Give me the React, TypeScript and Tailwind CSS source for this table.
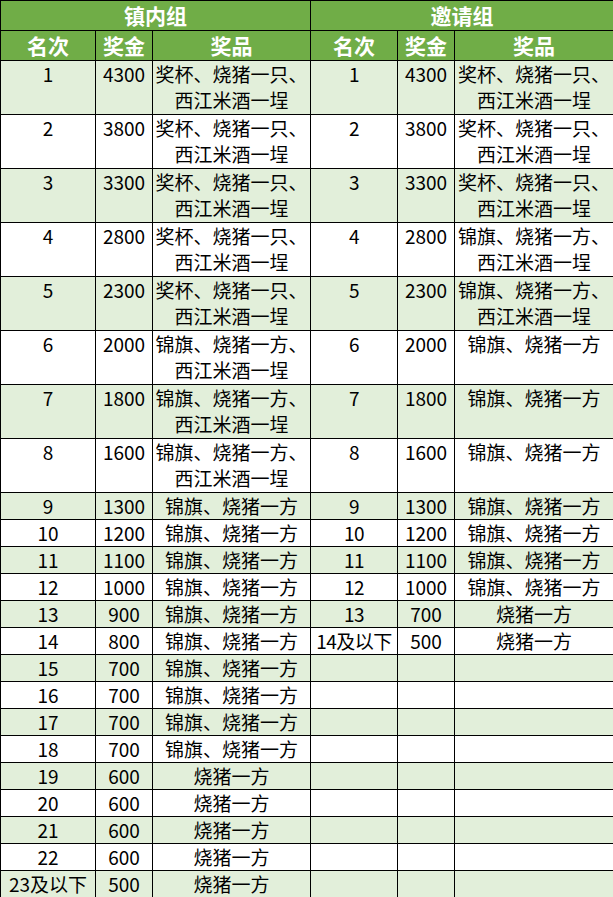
import React from "react";

type Row = { rank: string; money: string; prize: string[] };

const A = ["奖杯、烧猪一只、", "西江米酒一埕"];
const B = ["锦旗、烧猪一方、", "西江米酒一埕"];
const C = ["锦旗、烧猪一方"];
const D = ["烧猪一方"];

const townRows: Row[] = [
  { rank: "1", money: "4300", prize: A },
  { rank: "2", money: "3800", prize: A },
  { rank: "3", money: "3300", prize: A },
  { rank: "4", money: "2800", prize: A },
  { rank: "5", money: "2300", prize: A },
  { rank: "6", money: "2000", prize: B },
  { rank: "7", money: "1800", prize: B },
  { rank: "8", money: "1600", prize: B },
  { rank: "9", money: "1300", prize: C },
  { rank: "10", money: "1200", prize: C },
  { rank: "11", money: "1100", prize: C },
  { rank: "12", money: "1000", prize: C },
  { rank: "13", money: "900", prize: C },
  { rank: "14", money: "800", prize: C },
  { rank: "15", money: "700", prize: C },
  { rank: "16", money: "700", prize: C },
  { rank: "17", money: "700", prize: C },
  { rank: "18", money: "700", prize: C },
  { rank: "19", money: "600", prize: D },
  { rank: "20", money: "600", prize: D },
  { rank: "21", money: "600", prize: D },
  { rank: "22", money: "600", prize: D },
  { rank: "23及以下", money: "500", prize: D },
];

const inviteRows: Row[] = [
  { rank: "1", money: "4300", prize: A },
  { rank: "2", money: "3800", prize: A },
  { rank: "3", money: "3300", prize: A },
  { rank: "4", money: "2800", prize: B },
  { rank: "5", money: "2300", prize: B },
  { rank: "6", money: "2000", prize: C },
  { rank: "7", money: "1800", prize: C },
  { rank: "8", money: "1600", prize: C },
  { rank: "9", money: "1300", prize: C },
  { rank: "10", money: "1200", prize: C },
  { rank: "11", money: "1100", prize: C },
  { rank: "12", money: "1000", prize: C },
  { rank: "13", money: "700", prize: D },
  { rank: "14及以下", money: "500", prize: D },
];

const cell = "border border-black align-top text-center p-0 whitespace-nowrap";
const head = "border border-black text-center p-0 text-white font-bold text-[21px] leading-[29px]";

export default function App() {
  return (
    <div className="w-[613px] bg-white text-black font-['Noto_Sans_CJK_SC','Noto_Sans',sans-serif]">
      <table className="table-fixed border-collapse w-[613px] text-[19px] leading-[26px]">
        <colgroup>
          <col className="w-[95px]" />
          <col className="w-[57px]" />
          <col className="w-[158px]" />
          <col className="w-[87px]" />
          <col className="w-[57px]" />
          <col className="w-[159px]" />
        </colgroup>
        <thead>
          <tr className="h-[30px] bg-[#70ad47]">
            <th colSpan={3} className={head}>镇内组</th>
            <th colSpan={3} className={head}>邀请组</th>
          </tr>
          <tr className="h-[30px] bg-[#70ad47]">
            <th className={head}>名次</th>
            <th className={head}>奖金</th>
            <th className={head}>奖品</th>
            <th className={head}>名次</th>
            <th className={head}>奖金</th>
            <th className={head}>奖品</th>
          </tr>
        </thead>
        <tbody>
          {townRows.map((r, i) => {
            const v = inviteRows[i];
            const tall = i < 8;
            return (
              <tr
                key={i}
                className={`${tall ? "h-[54px]" : "h-[27px]"} ${i % 2 === 0 ? "bg-[#e2efda]" : "bg-white"}`}
              >
                <td className={cell}>{r.rank}</td>
                <td className={cell}>{r.money}</td>
                <td className={cell}>
                  {r.prize.map((l, k) => (
                    <div key={k}>{l}</div>
                  ))}
                </td>
                <td className={`${cell} tracking-[-0.5px]`}>{v ? v.rank : ""}</td>
                <td className={cell}>{v ? v.money : ""}</td>
                <td className={cell}>
                  {v
                    ? v.prize.map((l, k) => <div key={k}>{l}</div>)
                    : ""}
                </td>
              </tr>
            );
          })}
        </tbody>
      </table>
    </div>
  );
}
